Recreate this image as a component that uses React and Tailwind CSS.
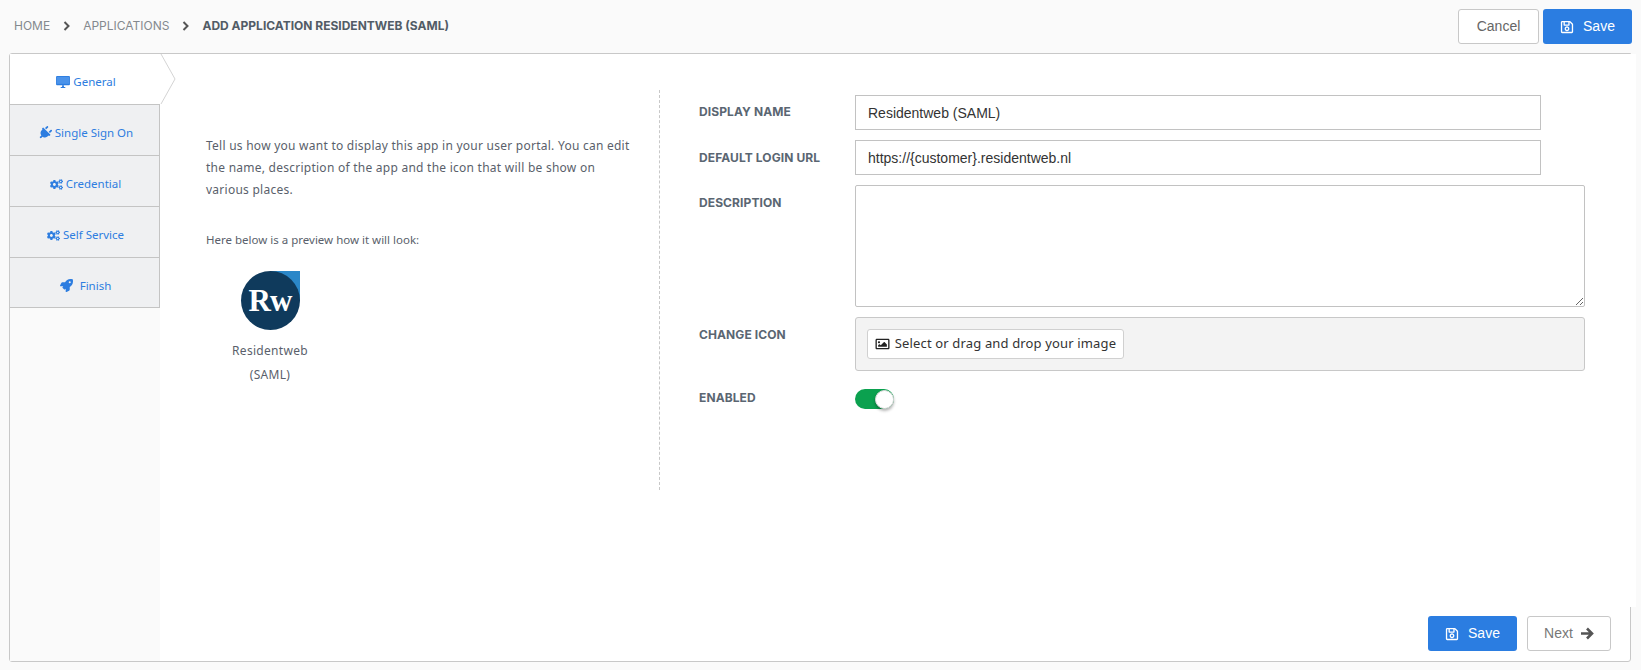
import React from 'react'
import { FaPlug, FaCogs, FaRocket, FaRegSave, FaRegImage } from 'react-icons/fa'

function DesktopIcon() {
  return (
    <svg width="14" height="12" viewBox="0 0 15 13" className="shrink-0">
      <rect x="0" y="0" width="15" height="10" rx="1" fill="#2d7de0" />
      <rect x="1" y="1" width="13" height="7.5" fill="#4b93ea" />
      <path d="M5 12 H10 V13 H5 Z M6.5 10 H8.5 V12 H6.5 Z" fill="#2d7de0" />
    </svg>
  )
}

function Chevron() {
  return (
    <svg width="7" height="10" viewBox="0 0 7 10" className="mx-[13px] shrink-0" fill="none">
      <path d="M1.5 1 L5.5 5 L1.5 9" stroke="#555" strokeWidth="2" />
    </svg>
  )
}

function ArrowIcon() {
  return (
    <svg width="14" height="13" viewBox="0 0 14 13" fill="none" className="shrink-0">
      <path d="M1 6.5 H11 M7 1.5 L12 6.5 L7 11.5" stroke="#555" strokeWidth="2.6" />
    </svg>
  )
}

const tabs = [
  { label: 'Single Sign On', icon: <FaPlug className="h-[14px] w-[14px] rotate-45" /> },
  { label: 'Credential', icon: <FaCogs className="h-[13px] w-[13px]" /> },
  { label: 'Self Service', icon: <FaCogs className="h-[13px] w-[13px]" /> },
  { label: 'Finish', icon: <FaRocket className="h-[13px] w-[13px]" />, gap: 'gap-[7px]' }
]

const labelClass = "w-[156px] shrink-0 font-['Inter',sans-serif] text-[12px] font-bold uppercase tracking-[0.1px] text-[#5a6672]"
const bodyFont = "font-['Noto_Sans',sans-serif]"
const arial = "font-['Liberation_Sans',sans-serif]"

function SaveButton() {
  return (
    <button className={`flex h-[35px] w-[89px] items-center justify-center gap-[9px] rounded-[3px] bg-[#2b7de1] text-[14px] text-white ${arial}`}>
      <FaRegSave className="h-[14px] w-[14px]" />
      Save
    </button>
  )
}

function Logo() {
  return (
    <div className="relative h-[59px] w-[59px]">
      <div className="absolute right-0 top-0 h-[30px] w-[30px] bg-[#2b87c8]" />
      <div className="absolute inset-0 flex items-center justify-center rounded-full bg-[#0f3a5c] font-['Liberation_Serif',serif] text-[31px] font-bold leading-none tracking-[-1px] text-white">
        Rw
      </div>
    </div>
  )
}

export default function App() {
  return (
    <div className="flex h-[670px] w-[1641px] flex-col overflow-hidden bg-[#fafafa]">
      {/* breadcrumb */}
      <div className="flex h-[53px] shrink-0 items-center justify-between pl-[14px] pr-[9px]">
        <div className="-mt-[2px] flex items-center font-['Inter',sans-serif] text-[12px] text-[#84898e]">
          <span>HOME</span>
          <Chevron />
          <span>APPLICATIONS</span>
          <Chevron />
          <span className="font-bold text-[#525c66]">ADD APPLICATION RESIDENTWEB (SAML)</span>
        </div>
        <div className="flex gap-[4px]">
          <button className={`h-[35px] w-[81px] rounded-[3px] border border-[#c8c8c8] bg-white text-[14px] text-[#666] ${arial}`}>Cancel</button>
          <SaveButton />
        </div>
      </div>

      {/* card */}
      <div className="ml-[9px] flex h-[609px] w-[1622px] rounded-b-[3px] rounded-tl-[3px] border border-[#c8c8c8] bg-white">
        <div className="w-[150px] shrink-0 rounded-tl-[3px] bg-[#fafafa]">
          <div className={`relative flex h-[50px] items-center justify-center gap-[3px] bg-white pl-[2px] pt-[6px] text-[11.5px] text-[#2d7de0] ${bodyFont}`}>
            <DesktopIcon />
            General
            <svg className="absolute left-[150px] top-0" width="17" height="51" viewBox="0 0 17 51" fill="none">
              <path d="M1 0 L15 25 L1 50" stroke="#d4d4d4" strokeWidth="1" />
            </svg>
          </div>
          {tabs.map(({ label, icon, gap }) => (
            <div
              key={label}
              className={`flex h-[51px] items-center justify-center ${gap || 'gap-[3px]'} border-r border-t border-[#c4c4c4] bg-[#eff0f2] pl-[2px] pt-[6px] text-[11.5px] text-[#2d7de0] last:border-b ${bodyFont}`}
            >
              {icon}
              {label}
            </div>
          ))}
        </div>

        <div className="flex min-w-0 flex-1 flex-col">
          <div className="-mr-[6px] flex h-[553px] shrink-0 bg-white pt-[36px]">
            {/* left description */}
            <div className={`h-[400px] w-[500px] shrink-0 border-r border-dashed border-[#c8c8c8] pl-[46px] pt-[45px] text-[#5a5f6b] ${bodyFont}`}>
              <p className="w-[432px] text-[12px] leading-[22px] tracking-[0.25px]">
                Tell us how you want to display this app in your user portal. You can edit the name, description of the app and the icon that will be show on various places.
              </p>
              <p className="mt-[28px] text-[11.5px] leading-[22px]">Here below is a preview how it will look:</p>
              <div className="ml-[14px] mt-[20px] flex w-[100px] flex-col items-center">
                <Logo />
                <div className="mt-[9px] text-center text-[12px] leading-[24px] tracking-[0.3px]">
                  Residentweb
                  <br />
                  (SAML)
                </div>
              </div>
            </div>

            {/* right form */}
            <div className="flex-1 pl-[39px] pt-[5px]">
              <div className="flex h-[35px] items-center">
                <div className={`${labelClass} -mt-[1px]`}>Display name</div>
                <input defaultValue="Residentweb (SAML)" className={`h-[35px] w-[686px] border border-[#c2c2c2] px-[12px] text-[14px] text-[#333] outline-none ${arial}`} />
              </div>
              <div className="mt-[10px] flex h-[35px] items-center">
                <div className={labelClass}>Default login URL</div>
                <input defaultValue="https://{customer}.residentweb.nl" className={`h-[35px] w-[686px] border border-[#c2c2c2] px-[12px] text-[14px] text-[#333] outline-none ${arial}`} />
              </div>
              <div className="mt-[10px] flex">
                <div className={`${labelClass} pt-[9px]`}>Description</div>
                <textarea className="block h-[122px] w-[730px] rounded-[2px] border border-[#c2c2c2] outline-none" />
              </div>
              <div className="mt-[10px] flex">
                <div className={`${labelClass} pt-[9px]`}>Change icon</div>
                <div className="flex h-[54px] w-[730px] items-center rounded-[3px] border border-[#c8c8c8] bg-[#f3f3f3] pl-[11px]">
                  <button className={`flex h-[30px] w-[257px] items-center justify-center gap-[5px] rounded-[3px] border border-[#d0d0d0] bg-white text-[13px] tracking-[0.15px] text-[#333] ${bodyFont}`}>
                    <FaRegImage className="h-[14px] w-[15px] text-[#222]" />
                    Select or drag and drop your image
                  </button>
                </div>
              </div>
              <div className="mt-[18px] flex items-center">
                <div className={`${labelClass} -mt-[2px]`}>Enabled</div>
                <div className="flex h-[20px] w-[39px] items-center justify-end rounded-full bg-[#0ba14f]">
                  <div className="h-[19px] w-[19px] rounded-full border border-[#dcdcdc] bg-white shadow-[0_2px_3px_rgba(0,0,0,0.3)]" />
                </div>
              </div>
            </div>
          </div>

          {/* footer actions */}
          <div className="flex flex-1 justify-end gap-[10px] pr-[19px] pt-[9px]">
            <SaveButton />
            <button className={`flex h-[35px] w-[84px] items-center justify-center gap-[7px] rounded-[3px] border border-[#c8c8c8] bg-white text-[14px] text-[#777] ${arial}`}>
              Next
              <ArrowIcon />
            </button>
          </div>
        </div>
      </div>
    </div>
  )
}
